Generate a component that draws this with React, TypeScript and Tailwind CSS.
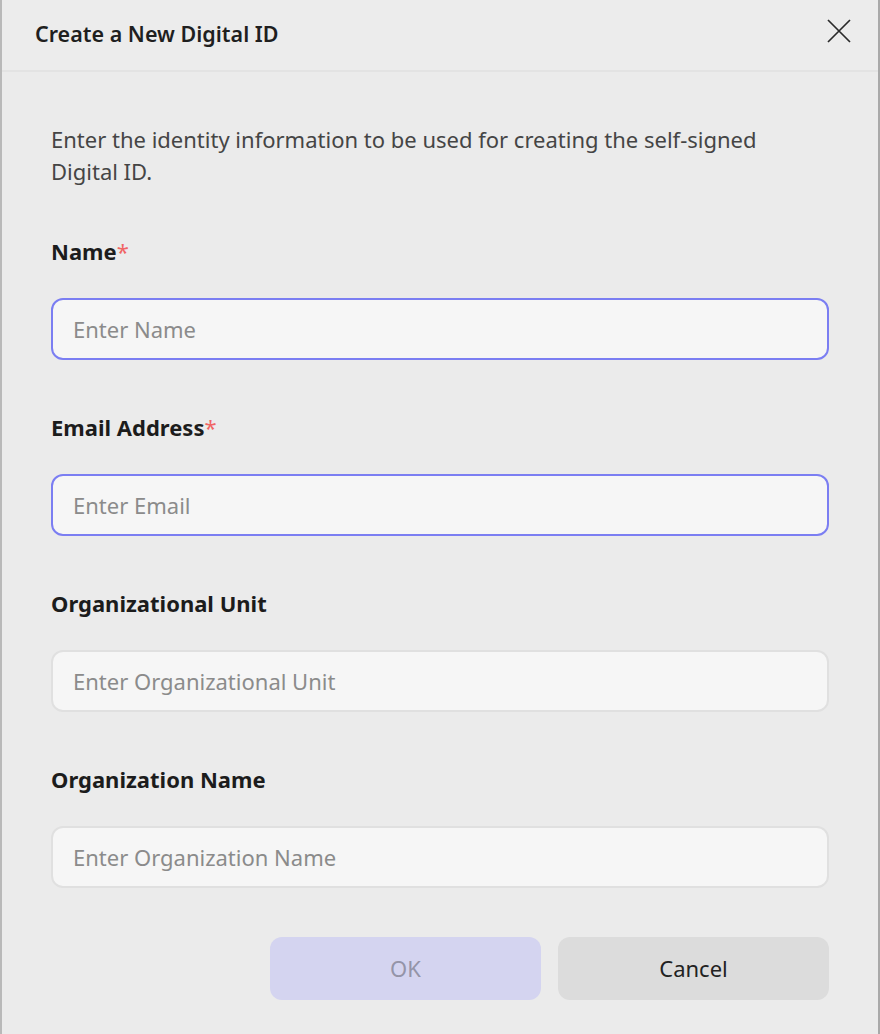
const fields = [
  { label: "Name", placeholder: "Enter Name", required: true },
  { label: "Email Address", placeholder: "Enter Email", required: true },
  { label: "Organizational Unit", placeholder: "Enter Organizational Unit", required: false },
  { label: "Organization Name", placeholder: "Enter Organization Name", required: false },
];

export default function App() {
  return (
    <div
      className="w-[880px] h-[1034px] overflow-hidden bg-[#ebebeb] border-l-2 border-r-2 border-l-[#b9b9b9] border-r-[#a9a9a9] flex flex-col"
      style={{ fontFamily: '"Noto Sans", "Open Sans", sans-serif' }}
    >
      {/* header */}
      <div className="h-[72px] shrink-0 flex items-center justify-between pl-[33px] pr-[27px] border-b-2 border-[#e3e3e3] bg-[#ececec]">
        <h1 className="text-[21.5px] font-semibold text-[#1f1f1f] -mt-[2px]">Create a New Digital ID</h1>
        <button className="w-6 h-6 flex items-center justify-center text-[#2a2a2a] -mt-[8px]">
          <svg width="24" height="24" viewBox="0 0 24 24" fill="none" stroke="currentColor" strokeWidth="1.7">
            <path d="M1 1L23 23M23 1L1 23" />
          </svg>
        </button>
      </div>

      <div className="flex flex-col px-[49px] pt-[51px]">
        <p className="text-[22px] leading-[32px] text-[#454545]">
          Enter the identity information to be used for creating the self-signed Digital ID.
        </p>

        <div className="flex flex-col gap-[51px] mt-[48px]">
          {fields.map((f) => (
            <div key={f.label} className="flex flex-col gap-[31px]">
              <label className="text-[22px] leading-[32px] font-bold text-[#1c1c1c]">
                {f.label}
                {f.required && <span className="text-[#f06464] font-normal">*</span>}
              </label>
              <input
                placeholder={f.placeholder}
                className={
                  f.required
                    ? "h-[62px] w-full rounded-[12px] bg-[#f6f6f6] border-2 border-[#7b7ef2] px-[20px] text-[22px] outline-none placeholder:text-[#8b8b8b]"
                    : "h-[62px] w-full rounded-[12px] bg-[#f6f6f6] border-2 border-[#e0e0e0] px-[20px] text-[22px] outline-none placeholder:text-[#8b8b8b]"
                }
              />
            </div>
          ))}
        </div>

        <div className="flex justify-end gap-[17px] mt-[49px]">
          <button className="w-[271px] h-[63px] rounded-[12px] bg-[#d4d4f0] text-[22px] text-[#9494a8]">OK</button>
          <button className="w-[271px] h-[63px] rounded-[12px] bg-[#dcdcdc] text-[22px] text-[#222222]">Cancel</button>
        </div>
      </div>
    </div>
  );
}
